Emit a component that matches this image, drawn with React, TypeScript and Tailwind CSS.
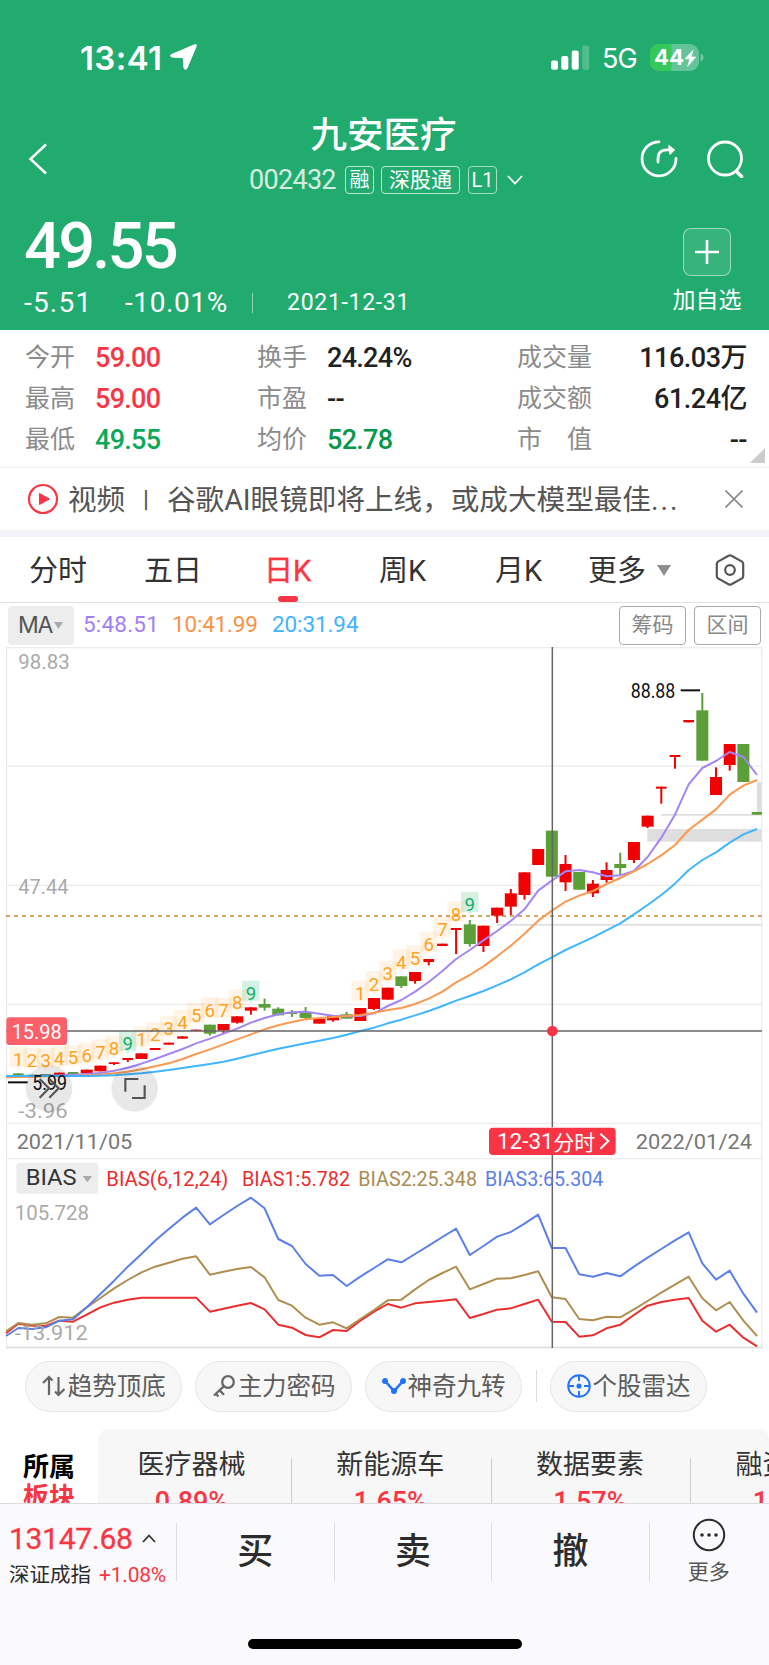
import React from 'react';

type Candle = { up: boolean; top: number; bottom: number; high?: number; low?: number; thin?: boolean };

const up = (top: number, bottom: number, low?: number, high?: number): Candle => ({ up: true, top, bottom, low, high });
const down = (top: number, bottom: number, low?: number, high?: number): Candle => ({ up: false, top, bottom, low, high });

// chart space uses 3 units per pixel
const STEP = 41.04;
const xAt = (i: number) => 55 + STEP * i;

const candles: Candle[] = [
    down(1300, 1307), down(1304, 1307), down(1302, 1307), up(1298, 1307), down(1296, 1304),
    up(1289, 1300), up(1277, 1294), up(1267, 1272, 1275), up(1254, 1260, 1266), up(1240, 1257),
    up(1224, 1230), up(1208, 1214), up(1189, 1196), up(1169, 1173), down(1154, 1181, 1187),
    up(1152, 1171, 1180), up(1129, 1148, 1151), up(1102, 1112, 1124), down(1092, 1103, 1112, 1076), down(1106, 1126, 1126, 1102),
    down(1118, 1122, 1131, 1110), down(1119, 1134, 1137, 1101), up(1136, 1151), up(1125, 1141, 1145), down(1123, 1136, 1136, 1116),
    up(1104, 1143), up(1074, 1107, 1110), up(1043, 1079), down(1009, 1038, 1044), up(996, 1023, 1031),
    up(957, 966, 976), up(911, 918), up(864, 870, 942), down(853, 912, 920, 840), up(857, 918, 936),
    up(803, 827, 849), up(760, 800, 825, 747), up(697, 765, 779), up(627, 675), down(572, 710),
    up(672, 727, 753, 645), down(696, 749), up(731, 760, 771, 720), up(690, 720, 728, 667), down(672, 684, 704, 638),
    up(606, 660, 669), up(527, 560, 564), up(440, 446, 491), up(345, 351, 386), up(240, 247),
    down(211, 362, 362, 159), up(411, 465, 465, 382), up(312, 375, 392), down(312, 426), down(516, 524),
];

const ma5 = [
    1308, 1307, 1307, 1306, 1304, 1302, 1299, 1292, 1283, 1271, 1257, 1242, 1227, 1210, 1196, 1181, 1166, 1148, 1134, 1123,
    1117, 1115, 1121, 1127, 1129, 1128, 1120, 1098, 1080, 1055, 1026, 993, 957, 930, 901, 873, 843, 808, 752, 722,
    694, 690, 697, 709, 706, 693, 651, 593, 524, 433, 384, 363, 336, 351, 405,
];
const ma10 = [
    1311, 1310, 1309, 1308, 1308, 1306, 1304, 1300, 1295, 1288, 1279, 1270, 1257, 1242, 1228, 1213, 1198, 1183, 1168, 1156,
    1146, 1138, 1134, 1131, 1128, 1125, 1118, 1110, 1104, 1092, 1076, 1055, 1027, 1005, 979, 949, 917, 881, 842, 812,
    785, 767, 753, 732, 714, 694, 672, 646, 615, 570, 539, 508, 464, 437, 420,
];
const ma20 = [
    1308, 1308, 1308, 1308, 1308, 1308, 1307, 1306, 1303, 1300, 1295, 1290, 1284, 1278, 1272, 1265, 1256, 1246, 1236, 1226,
    1218, 1210, 1202, 1194, 1184, 1173, 1163, 1150, 1139, 1126, 1113, 1098, 1082, 1068, 1053, 1036, 1018, 997, 973, 952,
    930, 911, 892, 871, 850, 823, 795, 765, 731, 690, 660, 637, 608, 583, 567,
];

const bias3 = [
    648, 624, 627, 622, 602, 598, 562, 522, 482, 440, 402, 362, 327, 293, 263, 313, 285, 258, 233, 265, 357, 378, 432, 467,
    465, 498, 470, 444, 418, 427, 402, 377, 351, 326, 405, 378, 350, 336, 311, 284, 384, 384, 463, 470, 459, 469, 440, 413,
    387, 361, 337, 430, 479, 452, 521, 578,
];
const bias2 = [
    634, 609, 614, 610, 591, 593, 562, 534, 505, 480, 457, 440, 428, 416, 409, 464, 455, 447, 441, 472, 540, 557, 593, 614,
    607, 625, 597, 570, 541, 539, 508, 480, 459, 440, 508, 492, 476, 475, 465, 454, 532, 537, 597, 601, 590, 592, 568, 543,
    518, 494, 470, 535, 571, 546, 602, 648,
];
const bias1 = [
    640, 611, 617, 618, 602, 605, 584, 562, 548, 539, 533, 533, 533, 533, 533, 575, 566, 557, 549, 568, 614, 623, 645, 652,
    630, 633, 602, 575, 552, 563, 550, 546, 542, 538, 594, 582, 569, 565, 552, 539, 605, 606, 650, 646, 625, 614, 585, 557,
    546, 539, 534, 602, 635, 614, 653, 679,
];

const nineTurns: { start: number; ys: number[] }[] = [
    { start: 0, ys: [1260, 1264, 1264, 1258, 1255, 1248, 1238, 1227, 1213] },
    { start: 9, ys: [1200, 1186, 1168, 1149, 1128, 1112, 1114, 1088, 1062] },
    { start: 25, ys: [1062, 1034, 1003, 968, 956, 916, 871, 824, 796] },
];

const toPoints = (ys: number[], first: number, offset = 0) =>
    ys.map((y, i) => `${Math.max(18, xAt(i + first)).toFixed(1)},${y + offset}`).join(' ');

const Label: React.FC<{ x: number; y: number; w: number; size: number; fill: string; weight?: number; children: string }> =
    ({ x, y, w, size, fill, weight = 400, children }) => (
        <text x={x} y={y} textLength={w} lengthAdjust="spacingAndGlyphs" fontSize={size} fill={fill} fontWeight={weight}>{children}</text>
    );

const StatusBar = () => (
    <div className="flex h-[70px] items-end pl-[80px] pr-[65px] text-white font-['Inter','Liberation_Sans',sans-serif]">
        <span className="w-[90px] text-[33px] leading-[24px] font-semibold tracking-[0.4px]">13:41</span>
        <svg width="27" height="26" viewBox="0 0 27 26" fill="#fff">
            <path d="M24.500.8Q26.800-.2 26.200 2.200L17 24.200Q15.200 26.800 14 24.200L13.400 14.800Q13.300 13.800 12.200 13.700L1.800 13Q-.8 12 1.300 10.600Z" stroke="#fff" strokeWidth="1" />
        </svg>
        <svg className="ml-auto" width="39" height="25" viewBox="0 0 39 25" fill="#fff">
            <rect x="0" y="15.500" width="7" height="9.200" rx="2" />
            <rect x="10.300" y="11" width="7" height="13.700" rx="2" />
            <rect x="20.700" y="5.500" width="7" height="19.200" rx="2" />
            <rect x="31.200" y="0.500" width="7" height="24.200" rx="2" opacity=".22" />
        </svg>
        <span className="ml-[12px] w-[37px] text-[27px] leading-[22px] tracking-[-0.8px]">5G</span>
        <svg className="ml-[11px] mb-[-1px]" width="54" height="27" viewBox="0 0 54 27">
            <clipPath id="battery"><rect width="49" height="27" rx="9" /></clipPath>
            <g clipPath="url(#battery)">
                <rect width="49" height="27" fill="#fff" opacity=".3" />
                <rect width="21.500" height="27" fill="#34c759" />
            </g>
            <path d="M50.500 9.500q3 .8 3 4t-3 4z" fill="#fff" opacity=".35" />
            <text x="4" y="21.300" fontSize="22" fontWeight="700" fill="#fff" textLength="30" lengthAdjust="spacingAndGlyphs">44</text>
            <path d="M43 6.200L35 14.800h4.700L37.700 22.500 45.700 13h-4.500z" fill="#fff" stroke="#fff" strokeWidth=".6" />
        </svg>
    </div>
);

const Header = () => (
    <header className="h-[330px] bg-[#21ab6e] text-white">
        <StatusBar />
        <div className="mt-[38px] flex h-[100px] items-center">
            <svg className="ml-[28px] mt-[2px]" width="20" height="32" viewBox="0 0 20 32" fill="none" stroke="#fff" strokeWidth="2.500">
                <path d="M18 1.500L2.500 16 18 30.500" />
            </svg>
            <div className="ml-[201px] flex w-[275px] flex-col">
                <h1 className="-mt-[8px] mr-[6px] text-center text-[36.5px] leading-[46px] font-medium">九安医疗</h1>
                <div className="mt-[5px] flex h-[32px] items-center text-[21px] leading-[26px]">
                    <span className="w-[96px] text-[27px] tracking-[-0.7px] opacity-80">002432</span>
                    <span className="flex h-[28px] w-[29px] items-center justify-center rounded-[4px] border border-white/70 text-[20px]">融</span>
                    <span className="ml-[7px] flex h-[28px] w-[79px] items-center justify-center rounded-[4px] border border-white/70">深股通</span>
                    <span className="ml-[8px] flex h-[28px] w-[29px] items-center justify-center rounded-[4px] border border-white/60 text-[20px]">L1</span>
                    <svg className="ml-[10px]" width="16" height="10" viewBox="0 0 16 10" fill="none" stroke="#fff" strokeWidth="1.800"><path d="M1 1l7 7.500L15 1" /></svg>
                </div>
            </div>
            <svg className="ml-[116px] mt-[2px]" width="38" height="38" viewBox="0 0 38 38" fill="none" stroke="#fff" strokeWidth="2.800" strokeLinecap="round" strokeLinejoin="round">
                <path d="M19 1.800A17 17 0 1 0 36 18.500" />
                <path d="M18 22V18.500Q18 9.800 27 9.800H33" />
                <path d="M29 5.800L34 10 30 14z" fill="#fff" strokeWidth="1.500" />
            </svg>
            <svg className="ml-[29px] mt-[2px]" width="38" height="38" viewBox="0 0 38 38" fill="none" stroke="#fff" strokeWidth="2.800" strokeLinecap="round">
                <circle cx="18" cy="18.500" r="16.500" />
                <path d="M29.500 31.500L34.500 36.500" strokeWidth="3.600" />
            </svg>
        </div>
        <div className="flex justify-between pl-[24px] pr-[26px]">
            <div>
                <div className="mt-[9px] text-[65px] leading-[58px] font-medium tracking-[-2.8px]">49.55</div>
                <div className="mt-[16px] flex h-[24px] items-center text-[28px] leading-[24px]">
                    <span className="w-[101px] tracking-[1.2px]">-5.51</span>
                    <span className="w-[127px] tracking-[0.6px]">-10.01%</span>
                    <span className="h-[20px] w-px bg-white/50" />
                    <span className="ml-[34px] text-[23px] tracking-[0.7px]">2021-12-31</span>
                </div>
            </div>
            <div className="mt-[20px] flex w-[72px] flex-col items-center">
                <div className="flex h-[48px] w-[48px] items-center justify-center rounded-[8px] border border-white/50 bg-white/10">
                    <svg width="24" height="24" viewBox="0 0 24 24" stroke="#fff" strokeWidth="2.600"><path d="M12 0v24M0 12h24" /></svg>
                </div>
                <span className="mt-[10px] text-[23px] leading-[30px] whitespace-nowrap">加自选</span>
            </div>
        </div>
    </header>
);

const quotes = [
    ['今开', '59.00', 'text-[#fa3644]', '换手', '24.24%', 'text-[#222]', '成交量', '116.03万'],
    ['最高', '59.00', 'text-[#fa3644]', '市盈', '--', 'text-[#222]', '成交额', '61.24亿'],
    ['最低', '49.55', 'text-[#0aa858]', '均价', '52.78', 'text-[#08964c]', '市　值', '--'],
];

const Quotes = () => (
    <section className="relative h-[138px] border-b border-[#eee] pt-[8px]">
        {quotes.map(([a, av, ac, b, bv, bc, c, cv]) => (
            <div key={a} className="flex h-[41px] items-center pl-[25px] pr-[22px] text-[25px] text-[#8b8b8b]">
                <span className="w-[70px] pb-[2px]">{a}</span>
                <span className={`w-[162px] text-[27px] font-medium tracking-[-0.7px] ${ac}`}>{av}</span>
                <span className="w-[70px] pb-[2px]">{b}</span>
                <span className={`w-[190px] text-[27px] font-medium tracking-[-0.7px] ${bc}`}>{bv}</span>
                <span className="w-[80px] pb-[2px] whitespace-nowrap">{c}</span>
                <span className="flex-1 text-right text-[27px] font-medium tracking-[-0.5px] whitespace-nowrap text-[#222]">{cv}</span>
            </div>
        ))}
        <svg className="absolute right-[4px] bottom-[4px]" width="15" height="15"><path d="M15 0v15H0z" fill="#ccc" /></svg>
    </section>
);

const News = () => (
    <section className="flex h-[69px] items-center border-b-[7px] border-[#f2f3f9] pl-[27px] pr-[26px] text-[28.6px] text-[#555]">
        <svg width="32" height="32" viewBox="0 0 32 32">
            <circle cx="16" cy="16" r="14" fill="none" stroke="#fa3644" strokeWidth="2.200" />
            <path d="M12.500 10.500v11l10-5.500z" fill="#fa3644" stroke="#fa3644" strokeLinejoin="round" />
        </svg>
        <span className="ml-[9px] w-[63px] pt-[3px] whitespace-nowrap">视频</span>
        <span className="w-[36px] pt-[3px] pl-[4px] text-[22px]">丨</span>
        <span className="w-[520px] pt-[3px] whitespace-nowrap">谷歌AI眼镜即将上线，或成大模型最佳<span className="font-['Roboto'] tracking-[2px]">...</span></span>
        <svg className="ml-auto" width="18" height="18" viewBox="0 0 18 18" stroke="#888" strokeWidth="1.600"><path d="M.5.5l17 17M17.500.5l-17 17" /></svg>
    </section>
);

const Tabs = () => (
    <nav className="flex h-[66px] items-center border-b border-[#e2e2e2] pl-[29px] pr-[24px] text-[29px] text-[#333]">
        <span className="w-[115px] pt-[4px]">分时</span>
        <span className="w-[120px] pt-[4px]">五日</span>
        <span className="relative w-[115px] pt-[4px] text-[#fa3644] [-webkit-text-stroke:0.4px_#fa3644]">
            日K
            <i className="absolute -bottom-[9px] left-[14px] h-[6px] w-[20px] rounded-[3px] bg-[#fa3644]" />
        </span>
        <span className="w-[116px] pt-[4px]">周K</span>
        <span className="w-[93px] pt-[4px]">月K</span>
        <span className="w-[69px] pt-[4px]">更多</span>
        <svg className="mt-[2px]" width="14" height="11"><path d="M0 0h14L7 11z" fill="#8f8f8f" /></svg>
        <svg className="ml-auto" width="30" height="32" viewBox="0 0 30 32" fill="none" stroke="#555" strokeWidth="2.200" strokeLinejoin="round">
            <path d="M13.500 1.800Q15 1 16.500 1.800L27 7.600Q28.200 8.400 28.200 10V22Q28.200 23.600 27 24.400L16.500 30.200Q15 31 13.500 30.200L3 24.400Q1.800 23.600 1.800 22V10Q1.800 8.400 3 7.600Z" />
            <circle cx="15" cy="16" r="4.800" />
        </svg>
    </nav>
);

const MaRow = () => (
    <div className="flex h-[44px] items-center pl-[8px] pr-[8px] text-[22.5px]">
        <div className="flex h-[39px] w-[66px] items-center gap-[2px] rounded-[4px] bg-[#ededed] pl-[10px] text-[23px] tracking-[-1.2px] text-[#555] font-['Inter',sans-serif]">
            <span className="w-[34px]">MA</span>
            <svg width="9" height="7"><path d="M0 0h9L4.500 7z" fill="#aaa" /></svg>
        </div>
        <span className="ml-[9px] w-[89px] tracking-[0.2px] text-[#9f7ff5]">5:48.51</span>
        <span className="w-[100px] tracking-[-0.2px] text-[#fc9246]">10:41.99</span>
        <span className="tracking-[-0.1px] text-[#3fb4ff]">20:31.94</span>
        <div className="ml-auto flex gap-[8px] text-[21px] text-[#888]">
            <span className="flex h-[39px] w-[67px] items-center justify-center rounded-[4px] border-[1.5px] border-[#aaa] pt-[2px]">筹码</span>
            <span className="flex h-[39px] w-[67px] items-center justify-center rounded-[4px] border-[1.5px] border-[#aaa] pt-[2px]">区间</span>
        </div>
    </div>
);

const CandleBar: React.FC<{ c: Candle; i: number }> = ({ c, i }) => {
    const color = c.up ? '#f00000' : '#5c9f38';
    const x = xAt(i);
    const half = c.bottom - c.top < 10 ? 16 : 18;
    return (
        <g fill={color}>
            <rect x={x - half} y={c.top} width={Math.min(half * 2, 2286 - x + half)} height={c.bottom - c.top} />
            <rect x={x - 3} y={c.high ?? c.top} width="6" height={(c.low ?? c.bottom) - (c.high ?? c.top)} />
        </g>
    );
};

const Chart = () => (
    <svg className="block" width="769" height="703" viewBox="0 21 2307 2109" fontFamily="Roboto, 'Noto Sans CJK SC', sans-serif">
        <g fill="#ececec">
            <rect x="18" y="21" width="2269" height="4" />
            <rect x="18" y="376" width="2269" height="4" />
            <rect x="18" y="734" width="2269" height="4" />
            <rect x="18" y="1091" width="2269" height="4" />
            <rect x="18" y="1448" width="2269" height="4" />
            <rect x="18" y="1554" width="2269" height="4" />
            <rect x="18" y="21" width="4" height="2103" />
            <rect x="2283" y="21" width="4" height="2103" />
            <rect x="18" y="2120" width="2269" height="5" fill="#ddd" />
        </g>
        <g fill="#dedede">
            <rect x="1942" y="567" width="343" height="38" />
            <rect x="2271" y="427" width="14" height="89" />
            <rect x="1983" y="522" width="302" height="5" />
            <rect x="1491" y="852" width="794" height="5" />
        </g>
        <path d="M18 828H2285" stroke="#d3a566" strokeWidth="5.500" strokeDasharray="12 12" />

        {candles.map((c, i) => <CandleBar key={i} c={c} i={i} />)}

        {nineTurns.map(({ start, ys }) => ys.map((y, n) => {
            const x = xAt(start + n);
            const last = n === 8;
            return (
                <g key={start + n}>
                    <path
                        d={`M${x - 26} ${y - 40}h52v60h-18l-8 8-8-8h-18z`}
                        fill={last ? '#1aae6c' : '#ff9a1f'}
                        opacity={last ? 0.18 : 0.11}
                    />
                    <text x={x} y={y + 18} fontSize="56" textAnchor="middle" fill={last ? '#12ae68' : '#ffa21f'}>{n + 1}</text>
                </g>
            );
        }))}

        <g fill="none" strokeWidth="6" strokeLinejoin="round">
            <polyline points={toPoints([1309, ...ma5], -1)} stroke="#a385f5" />
            <polyline points={toPoints([1312, ...ma10], -1)} stroke="#fc9850" />
            <polyline points={toPoints([1308, ...ma20], -1)} stroke="#3fb6ff" />
            <polyline points={toPoints(bias1, -1, 1440)} stroke="#ec2d2d" />
            <polyline points={toPoints(bias2, -1, 1440)} stroke="#b08e50" />
            <polyline points={toPoints(bias3, -1, 1440)} stroke="#5b80e8" />
        </g>

        <Label x={55} y={87} w={154} size={63} fill="#aaa">98.83</Label>
        <Label x={55} y={761} w={150} size={63} fill="#aaa">47.44</Label>
        <Label x={55} y={1435} w={148} size={63} fill="#aaa">-3.96</Label>
        <Label x={1892} y={173} w={134} size={58} fill="#111">88.88</Label>
        <rect x="2042" y="148" width="58" height="6" fill="#111" />
        <rect x="24" y="1324" width="59" height="6" fill="#111" />
        <Label x={97} y={1350} w={104} size={58} fill="#111">5.99</Label>

        {/* floating chart buttons */}
        <circle cx="147" cy="1345" r="70" fill="#000" opacity=".09" />
        <circle cx="404" cy="1345" r="70" fill="#000" opacity=".09" />
        <g fill="none" stroke="#555" strokeWidth="6.500">
            <path d="M119 1317l28 28-28 28M148 1317l28 28-28 28" />
            <path d="M376 1355v-38h39M396 1374h38v-38" />
        </g>

        {/* crosshair */}
        <path d="M18 1173H2286M1657 21V1462M1657 1545V2124" stroke="#666" strokeWidth="4.500" />
        <circle cx="1657" cy="1173" r="16" fill="#f93545" />
        <rect x="19" y="1132" width="182" height="83" rx="10" fill="#fa5f6a" />
        <Label x={35} y={1198} w={150} size={62} fill="#fff">15.98</Label>

        {/* date axis */}
        <Label x={50} y={1527} w={347} size={62} fill="#777">2021/11/05</Label>
        <Label x={1907} y={1527} w={349} size={62} fill="#777">2022/01/24</Label>
        <rect x="1467" y="1463" width="380" height="82" rx="12" fill="#f93545" />
        <Label x={1491} y={1527} w={170} size={64} fill="#fff">12-31</Label>
        <Label x={1660} y={1529} w={126} size={63} fill="#fff">分时</Label>
        <path d="M1801 1481l24 22-24 23" fill="none" stroke="#fff" strokeWidth="6" />

        {/* sub indicator */}
        <rect x="49" y="1568" width="246" height="93" rx="10" fill="#ededed" />
        <Label x={77} y={1635} w={153} size={68} fill="#333">BIAS</Label>
        <path d="M248 1608h28l-14 19z" fill="#aaa" />
        <Label x={319} y={1638} w={366} size={60} fill="#ec2d2d">BIAS(6,12,24)</Label>
        <Label x={726} y={1638} w={324} size={60} fill="#ec2d2d">BIAS1:5.782</Label>
        <Label x={1075} y={1638} w={356} size={60} fill="#ab8b52">BIAS2:25.348</Label>
        <Label x={1455} y={1638} w={355} size={60} fill="#5b80e8">BIAS3:65.304</Label>
        <Label x={44} y={1739} w={223} size={63} fill="#aaa">105.728</Label>
        <Label x={44} y={2101} w={219} size={63} fill="#aaa">-13.912</Label>
    </svg>
);

const tools = [
    {
        label: '趋势顶底',
        icon: (
            <svg width="24" height="24" viewBox="0 0 24 24" fill="none" stroke="#666" strokeWidth="2.200">
                <path d="M7 21V3.500M1 9l6-6 3.500 3.500M16.500 3v17.500M22.500 15l-6 6L13 17.500" />
            </svg>
        ),
    },
    {
        label: '主力密码',
        icon: (
            <svg width="24" height="24" viewBox="0 0 24 24" fill="none" stroke="#666" strokeWidth="2.300">
                <circle cx="16" cy="8" r="5.800" />
                <path d="M12 12.200L2 21.500M7.500 16.300l4.500 4.500M3.500 19.500l3 3" />
            </svg>
        ),
    },
    {
        label: '神奇九转',
        icon: (
            <svg width="24" height="24" viewBox="0 0 24 24" fill="#1f73ff" stroke="#1f73ff" strokeWidth="2.600">
                <path d="M3 7l9 10 9-10" fill="none" />
                <circle cx="3" cy="7" r="1.700" />
                <circle cx="12" cy="17" r="1.700" />
                <circle cx="21" cy="7" r="1.700" />
            </svg>
        ),
    },
    {
        label: '个股雷达',
        icon: (
            <svg width="24" height="24" viewBox="0 0 24 24" fill="none" stroke="#1f73ff" strokeWidth="1.900">
                <circle cx="12" cy="12" r="10.800" />
                <path d="M12 1v6M12 17v6M1 12h6M17 12h6" />
                <circle cx="12" cy="12" r="1.600" fill="#1f73ff" />
            </svg>
        ),
    },
];

const Tools = () => (
    <div className="flex h-[72px] items-center pl-[25px]">
        {tools.map(({ label, icon }, i) => (
            <React.Fragment key={label}>
                {i === 3 && <i className="mr-[13px] ml-[1px] h-[32px] w-px bg-[#ddd]" />}
                <div className="mr-[12.7px] flex h-[51px] w-[157.3px] shrink-0 items-center justify-center rounded-full border border-[#e6e6e6] bg-[#f7f7f7] text-[24.5px] whitespace-nowrap text-[#5c5c5c]">
                    {icon}
                    <span className="ml-[2px] pt-[2px]">{label}</span>
                </div>
            </React.Fragment>
        ))}
    </div>
);

const sectors = [['医疗器械', '0.89%'], ['新能源车', '1.65%'], ['数据要素', '1.57%'], ['融资融券', '1.20%']];

const Sectors = () => (
    <section className="flex h-[81px] overflow-hidden pt-[7px]">
        <div className="w-[98px] shrink-0 pt-[23px] pl-[23px] text-[26px] leading-[30px] font-bold text-black">
            <div>所属</div>
            <div className="text-[#fa3644]">板块</div>
        </div>
        <div className="flex h-[90px] w-[671px] shrink-0 overflow-hidden rounded-[10px] bg-[#f7f7f7]">
            {sectors.map(([name, pct], i) => (
                <div key={name} className={`relative flex shrink-0 flex-col items-center pt-[17px] pr-[3px] text-[27px] leading-[38px] text-[#333] ${i === 0 ? 'w-[194px] pr-[7px]' : 'w-[199.6px]'}`}>
                    <span>{name}</span>
                    <span className="mt-[1px] text-[27px] leading-[34px] font-medium text-[#fa3644]">{pct}</span>
                    <i className="absolute top-[29px] right-0 h-[60px] w-px bg-[#ccc]" />
                </div>
            ))}
        </div>
    </section>
);

const BottomBar = () => (
    <footer className="h-[163px] border-t border-[#dcdce0] bg-[#fafafc]">
        <div className="flex h-[96px] items-center text-[#2c2c2c]">
            <div className="w-[176px] pt-[7px] pl-[9px]">
                <div className="flex items-center text-[30px] leading-[34px] text-[#fa3644]">
                    <span className="w-[133px] tracking-[-0.3px] [-webkit-text-stroke:0.3px_#fa3644]">13147.68</span>
                    <svg width="14" height="9" viewBox="0 0 14 9" fill="none" stroke="#333" strokeWidth="1.800"><path d="M1 8l6-6.500L13 8" /></svg>
                </div>
                <div className="mt-[4px] flex text-[20.5px] leading-[30px] whitespace-nowrap">
                    <span className="w-[90px]">深证成指</span>
                    <span className="text-[21px] tracking-[-0.2px] text-[#fa3644]">+1.08%</span>
                </div>
            </div>
            {['买', '卖', '撤'].map(t => (
                <div key={t} className="flex h-[58px] w-[157.6px] items-center justify-center border-l border-[#ddd] text-[36px] font-medium">{t}</div>
            ))}
            <div className="flex h-[58px] w-[119px] flex-col items-center justify-center border-l border-[#ddd] text-[21px] leading-[28px] text-[#555]">
                <svg className="shrink-0" width="34" height="34" viewBox="0 0 34 34" fill="none" stroke="#2c2c2c" strokeWidth="2">
                    <circle cx="17" cy="17" r="15.200" />
                    <g fill="#2c2c2c" stroke="none"><circle cx="10" cy="17" r="1.800" /><circle cx="17" cy="17" r="1.800" /><circle cx="24" cy="17" r="1.800" /></g>
                </svg>
                <span className="mt-[6px] whitespace-nowrap">更多</span>
            </div>
        </div>
        <div className="mx-auto mt-[39px] h-[10px] w-[274px] rounded-full bg-black" />
    </footer>
);

export default function App() {
    return (
        <div className="h-[1665px] w-[769px] overflow-hidden bg-white font-['Roboto','Noto_Sans_CJK_SC',sans-serif]">
            <Header />
            <Quotes />
            <News />
            <Tabs />
            <MaRow />
            <Chart />
            <Tools />
            <Sectors />
            <BottomBar />
        </div>
    );
}
